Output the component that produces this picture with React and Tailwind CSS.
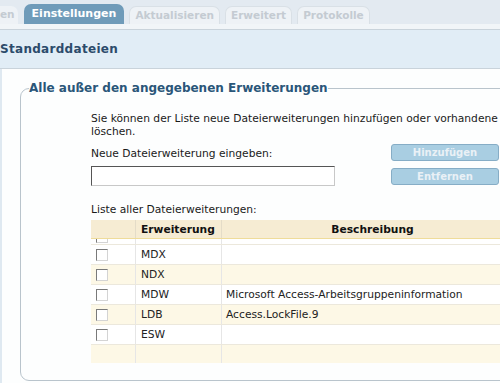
import React from 'react';

const rows = [
  { ext: 'MDX', desc: '' },
  { ext: 'NDX', desc: '' },
  { ext: 'MDW', desc: 'Microsoft Access-Arbeitsgruppeninformation' },
  { ext: 'LDB', desc: 'Access.LockFile.9' },
  { ext: 'ESW', desc: '' },
];

const Checkbox = () => (
  <span className="block w-[12px] h-[12px] bg-white border border-t-[#7a7a7a] border-l-[#7a7a7a] border-r-[#d4d4d4] border-b-[#d4d4d4]" />
);

const Tab = ({ label, active, className = '' }) => (
  <div
    className={`flex items-center rounded-t-[7px] font-bold ${
      active
        ? 'h-[20px] px-[8px] text-[11px] bg-[#6f9bb9] text-white'
        : 'h-[18px] px-[5px] text-[10.5px] bg-[#eef2f6] text-[#c4cbd2] border border-b-0 border-[#d9e0e6]'
    } ${className}`}
  >
    {label}
  </div>
);

const App = () => {
  return (
    <div
      className="w-[500px] h-[383px] overflow-hidden bg-white text-[#1a1a1a]"
      style={{ fontFamily: '"DejaVu Sans", Verdana, sans-serif' }}
    >
      {/* tabs */}
      <div className="h-[24px] bg-[#e3eaf1] flex items-end gap-[5px] overflow-hidden">
        <div className="h-[18px] flex items-center text-[10.5px] font-bold text-[#c4cbd2] bg-[#eef2f6] pr-[3px] rounded-tr-[7px]">en</div>
        <Tab label="Einstellungen" active className="ml-[1px]" />
        <Tab label="Aktualisieren" />
        <Tab label="Erweitert" />
        <Tab label="Protokolle" />
      </div>
      <div className="h-[6px] bg-[#f1f5f8] border-b border-[#c9d3db]" />

      {/* section header */}
      <div className="h-[39px] bg-[#e1edf6] border-b border-[#c9d3db] flex items-center">
        <h1 className="text-[12px] font-bold text-[#2c4b6b] tracking-[0.3px]">Standarddateien</h1>
      </div>

      {/* body */}
      <div className="border-l-2 border-[#dfe9f1] bg-[#fdfefe] pt-[10px] pl-[18px] h-[320px]">
        <fieldset className="w-[520px] border border-[#b9c4cc] rounded-[9px] pb-[17px]">
          <legend className="ml-[8px] text-[12px] font-bold text-[#2a5679]">
            Alle außer den angegebenen Erweiterungen
          </legend>

          <div className="pl-[70px] text-[10.7px] leading-[13px]">
            <p className="mt-[15px] w-[420px]">
              Sie können der Liste neue Dateierweiterungen hinzufügen oder vorhandene löschen.
            </p>

            <div className="flex mt-[6px]">
              <div className="w-[300px]">
                <p className="mt-[3px]">Neue Dateierweiterung eingeben:</p>
                <input
                  type="text"
                  className="mt-[6px] block w-[244px] h-[20px] bg-white border border-t-[#555] border-l-[#555] border-r-[#c8c8c8] border-b-[#c8c8c8]"
                />
              </div>
              <div className="w-[108px] flex flex-col gap-[7px]">
                <button className="h-[17px] rounded-[3px] bg-[#a9cee2] border border-[#86adc6] text-[10px] font-bold text-[#eaf1f6]">
                  Hinzufügen
                </button>
                <button className="h-[17px] rounded-[3px] bg-[#a9cee2] border border-[#86adc6] text-[10px] font-bold text-[#eaf1f6]">
                  Entfernen
                </button>
              </div>
            </div>

            <p className="mt-[17px]">Liste aller Dateierweiterungen:</p>

            <div className="mt-[4px] w-[432px] text-[#222]">
              <div className="flex h-[19px] bg-[#f6ecd3] border-b border-[#efdc9a] font-bold text-[#111]">
                <div className="w-[44px]" />
                <div className="w-[86px] border-l border-[#e4dcc8] pl-[5px] flex items-center">Erweiterung</div>
                <div className="flex-1 border-l border-[#e4dcc8] flex items-center justify-center">Beschreibung</div>
              </div>
              <div className="flex h-[5px] bg-white overflow-hidden">
                <div className="w-[44px] pl-[5px] -mt-[8px]"><Checkbox /></div>
                <div className="w-[86px] border-l border-[#e6e6e6]" />
                <div className="flex-1 border-l border-[#e6e6e6]" />
              </div>
              {rows.map((r, i) => (
                <div
                  key={r.ext}
                  className={`flex h-[20px] border-t border-[#ece8dc] ${i % 2 === 0 ? 'bg-white' : 'bg-[#fdf8e6]'}`}
                >
                  <div className="w-[44px] pl-[5px] flex items-center"><Checkbox /></div>
                  <div className="w-[86px] border-l border-[#e6e6e6] pl-[5px] flex items-center">{r.ext}</div>
                  <div className="flex-1 border-l border-[#e6e6e6] pl-[4px] flex items-center">{r.desc}</div>
                </div>
              ))}
              <div className="flex h-[19px] border-t border-[#ece8dc] bg-[#fdf8e6]">
                <div className="w-[44px]" />
                <div className="w-[86px] border-l border-[#e6e6e6]" />
                <div className="flex-1 border-l border-[#e6e6e6]" />
              </div>
            </div>
          </div>
        </fieldset>
      </div>
    </div>
  );
};

export default App;
